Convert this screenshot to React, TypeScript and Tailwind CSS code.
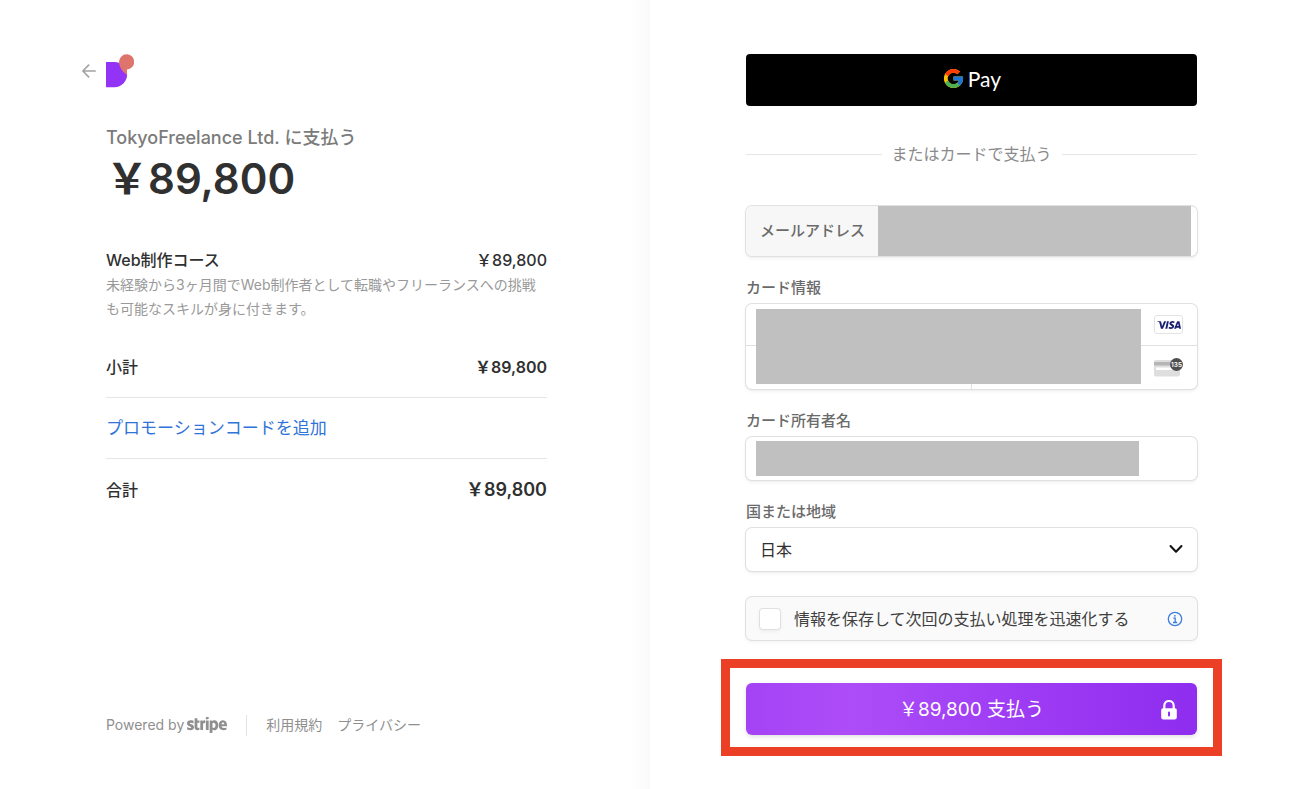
import React from "react";
import { FaStripe } from "react-icons/fa";
import { FcGoogle } from "react-icons/fc";
import { SiVisa } from "react-icons/si";

const fieldBox =
  "rounded-md bg-white shadow-[0_0_0_1px_#e0e0e0,0_2px_4px_rgba(0,0,0,0.07),0_1px_2px_rgba(0,0,0,0.05)]";
const fieldLabel = "mt-5 mb-1 block text-[15px] leading-6 font-medium text-[#6a6a6a]";

function BrandMark() {
  return (
    <svg viewBox="0 0 28 34" className="h-[34px] w-7" aria-hidden="true">
      <path d="M0 8h8.500a12.600 12.600 0 0 1 0 25.200H0z" fill="#9333f5" />
      <path d="M13 8a7.600 7.600 0 1 1 8 7.500V21C17 18 13.500 14 13 8z" fill="#dd756c" />
    </svg>
  );
}

function BackArrow() {
  return (
    <svg viewBox="0 0 14 14" className="h-3.5 w-3.5" fill="none" stroke="#a3a3a3" strokeWidth="1.700" strokeLinecap="round" strokeLinejoin="round">
      <path d="M13.200 7H1M6.600 1.200L.9 7l5.700 5.800" />
    </svg>
  );
}

function CvcIcon() {
  return (
    <svg viewBox="0 0 30 20" className="h-5 w-[30px]" aria-hidden="true">
      <rect x="0" y="2" width="26" height="16.500" rx="2" fill="#dedede" />
      <rect x="0" y="4" width="26" height="3.500" fill="#b5b5b5" />
      <rect x="2" y="9.500" width="20" height="2.500" fill="#fff" />
      <circle cx="22.500" cy="6.500" r="6.500" fill="#4f4f4f" />
      <text x="22.500" y="9" textAnchor="middle" fontSize="6.500" fontWeight="600" fill="#fff">
        135
      </text>
    </svg>
  );
}

function LockIcon() {
  return (
    <svg viewBox="0 0 16 20" className="h-5 w-4" aria-hidden="true">
      <path d="M3.300 9V5.700a4.700 4.700 0 0 1 9.400 0V9" fill="none" stroke="#fff" strokeWidth="2.200" />
      <path
        fillRule="evenodd"
        fill="#fff"
        d="M2 8.200h12a1.800 1.800 0 0 1 1.800 1.800v7.600a1.800 1.800 0 0 1-1.800 1.800H2A1.800 1.800 0 0 1 .2 17.600V10A1.800 1.800 0 0 1 2 8.200zM7 12.600v2.800a1 1 0 0 0 2 0v-2.800a1 1 0 0 0-2 0z"
      />
    </svg>
  );
}

function InfoIcon() {
  return (
    <svg viewBox="0 0 16 16" className="h-4 w-4" fill="none" stroke="#3b7de0" strokeWidth="1.300">
      <circle cx="8" cy="8" r="6.700" />
      <path d="M6.300 7.200h1.900v4.200M6 11.500h4.200" />
      <circle cx="7.900" cy="4.800" r=".9" fill="#3b7de0" stroke="none" />
    </svg>
  );
}

function OrderSummary() {
  return (
    <section className="flex w-1/2 flex-col bg-[linear-gradient(to_left,#fafafa,#ffffff_20px)] pt-[54px] pr-[103px] pb-[52px] pl-[106px]">
      <a href="#back" aria-label="戻る" className="-ml-6 flex items-center gap-2.5 self-start">
        <BackArrow />
        <BrandMark />
      </a>

      <h1 className="mt-[38px] text-[18px] leading-6 font-medium text-[#7b7b7b]">TokyoFreelance Ltd. に支払う</h1>
      <p className="mt-[5px] text-[42px] leading-[48px] font-semibold text-[#303030]">￥89,800</p>

      <div className="mt-[45px] flex justify-between text-[16px] leading-6 font-medium text-[#303030]">
        <span>Web制作コース</span>
        <span>￥89,800</span>
      </div>
      <p className="mt-px text-[14px] leading-6 text-[#999999]">
        未経験から3ヶ月間でWeb制作者として転職やフリーランスへの挑戦も可能なスキルが身に付きます。
      </p>

      <div className="mt-[34px] flex justify-between border-b border-[#e6e6e6] pb-[18px] text-[16px] leading-6 font-medium text-[#303030]">
        <span>小計</span>
        <span className="font-semibold">￥89,800</span>
      </div>
      <div className="flex border-b border-[#e6e6e6] py-[18px]">
        <button type="button" className="text-[17px] leading-6 text-[#2f74d8]">
          プロモーションコードを追加
        </button>
      </div>
      <div className="mt-[19px] flex items-center justify-between text-[16px] leading-6 font-medium text-[#303030]">
        <span>合計</span>
        <span className="text-[18px] font-semibold">￥89,800</span>
      </div>

      <footer className="mt-auto flex items-center text-[14px] leading-6 text-[#8f8f8f]">
        <a href="#stripe" className="flex items-center gap-[3px]">
          Powered by
          <FaStripe viewBox="0 130 640 252" className="h-4 w-10" aria-label="stripe" />
        </a>
        <span className="mx-[19px] h-[21px] w-px bg-[#e3e3e3]" />
        <a href="#terms">利用規約</a>
        <a href="#privacy" className="ml-[15px]">
          プライバシー
        </a>
      </footer>
    </section>
  );
}

function PaymentForm() {
  return (
    <form className="w-1/2 pt-[54px] pr-[103px] pl-24" onSubmit={(e) => e.preventDefault()}>
      <button type="button" className="flex h-[52px] w-full items-center justify-center gap-[3px] rounded bg-black pb-[3px]">
        <FcGoogle className="h-[23px] w-[23px]" />
        <span className="font-[Lato,sans-serif] text-[21px] leading-6 text-white">Pay</span>
      </button>

      <div className="mt-9 flex items-center gap-2.5 text-[16px] leading-6 text-[#8a8a8a]">
        <span className="h-px flex-1 bg-[#e6e6e6]" />
        またはカードで支払う
        <span className="h-px flex-1 bg-[#e6e6e6]" />
      </div>

      <div className={`mt-10 flex h-[50px] overflow-hidden bg-[#f7f7f7] pr-1.5 ${fieldBox}`}>
        <label htmlFor="email" className="flex w-[132px] items-center bg-[#f7f7f7] pl-3.5 text-[15px] font-medium text-[#6a6a6a]">
          メールアドレス
        </label>
        <input id="email" type="email" className="min-w-0 flex-1 bg-[#c0c0c0] px-3 outline-none" />
      </div>

      <label htmlFor="card-number" className={fieldLabel}>
        カード情報
      </label>
      <div className={`relative ${fieldBox}`}>
        <div className="flex h-[42px] items-center border-b border-[#e0e0e0] pr-3.5">
          <input id="card-number" inputMode="numeric" className="h-full min-w-0 flex-1 bg-transparent px-3 outline-none" />
          <span className="flex h-[19px] w-[29px] items-center justify-center rounded-[3px] border border-[#e3e3e3] bg-white">
            <SiVisa className="h-6 w-6 text-[#1a1f71]" />
          </span>
        </div>
        <div className="flex h-[43px]">
          <input aria-label="有効期限" className="w-1/2 border-r border-[#e0e0e0] bg-transparent px-3 outline-none" />
          <div className="flex w-1/2 items-center pr-[13px]">
            <input aria-label="セキュリティコード" className="h-full min-w-0 flex-1 bg-transparent px-3 outline-none" />
            <CvcIcon />
          </div>
        </div>
        <div className="pointer-events-none absolute inset-y-[5px] right-14 left-2.5 bg-[#c0c0c0]" />
      </div>

      <label htmlFor="card-name" className={fieldLabel}>
        カード所有者名
      </label>
      <div className={`flex h-[43px] py-1 pr-[58px] pl-2.5 ${fieldBox}`}>
        <input id="card-name" className="min-w-0 flex-1 bg-[#c0c0c0] px-1 outline-none" />
      </div>

      <label htmlFor="country" className={fieldLabel}>
        国または地域
      </label>
      <div className={`relative h-[43px] ${fieldBox}`}>
        <select id="country" className="h-full w-full appearance-none bg-transparent px-3.5 text-[16px] text-[#303030] outline-none">
          <option>日本</option>
        </select>
        <svg viewBox="0 0 14 10" className="pointer-events-none absolute top-4 right-3.5 h-2.5 w-3.5" fill="none" stroke="#111" strokeWidth="2" strokeLinecap="round" strokeLinejoin="round">
          <path d="M1.500 2L7 7.800 12.500 2" />
        </svg>
      </div>

      <div className="mt-[26px] flex h-[43px] items-center rounded-md bg-[#fafafa] px-3.5 shadow-[0_0_0_1px_#e0e0e0,0_2px_4px_rgba(0,0,0,0.06)]">
        <input
          id="save-info"
          type="checkbox"
          className="h-5 w-5 appearance-none rounded-[3px] bg-white shadow-[0_0_0_1px_#e0e0e0,0_2px_4px_rgba(0,0,0,0.07)] checked:bg-[#9333f5]"
        />
        <label htmlFor="save-info" className="ml-3.5 flex-1 text-[16px] leading-6 text-[#404040]">
          情報を保存して次回の支払い処理を迅速化する
        </label>
        <button type="button" aria-label="詳細">
          <InfoIcon />
        </button>
      </div>

      <div className="relative mt-[43px]">
        <button
          type="submit"
          className="flex h-[52px] w-full items-center rounded-md bg-[linear-gradient(to_right,#a443f5,#ad4df8_23%,#9e3cf4_60%,#8f2df0)] px-5 pt-0.5 text-[19px] leading-6 text-white shadow-[0_2px_4px_rgba(0,0,0,0.12)]"
        >
          <span className="w-4" />
          <span className="flex-1">￥89,800 支払う</span>
          <LockIcon />
        </button>
        <div className="pointer-events-none absolute -inset-x-[25px] -top-6 -bottom-[21px] border-[9px] border-[#eb4025]" />
      </div>
    </form>
  );
}

export default function App() {
  return (
    <main className="flex min-h-screen bg-white font-[Inter,'Noto_Sans_CJK_JP',sans-serif]" lang="ja">
      <OrderSummary />
      <PaymentForm />
    </main>
  );
}
